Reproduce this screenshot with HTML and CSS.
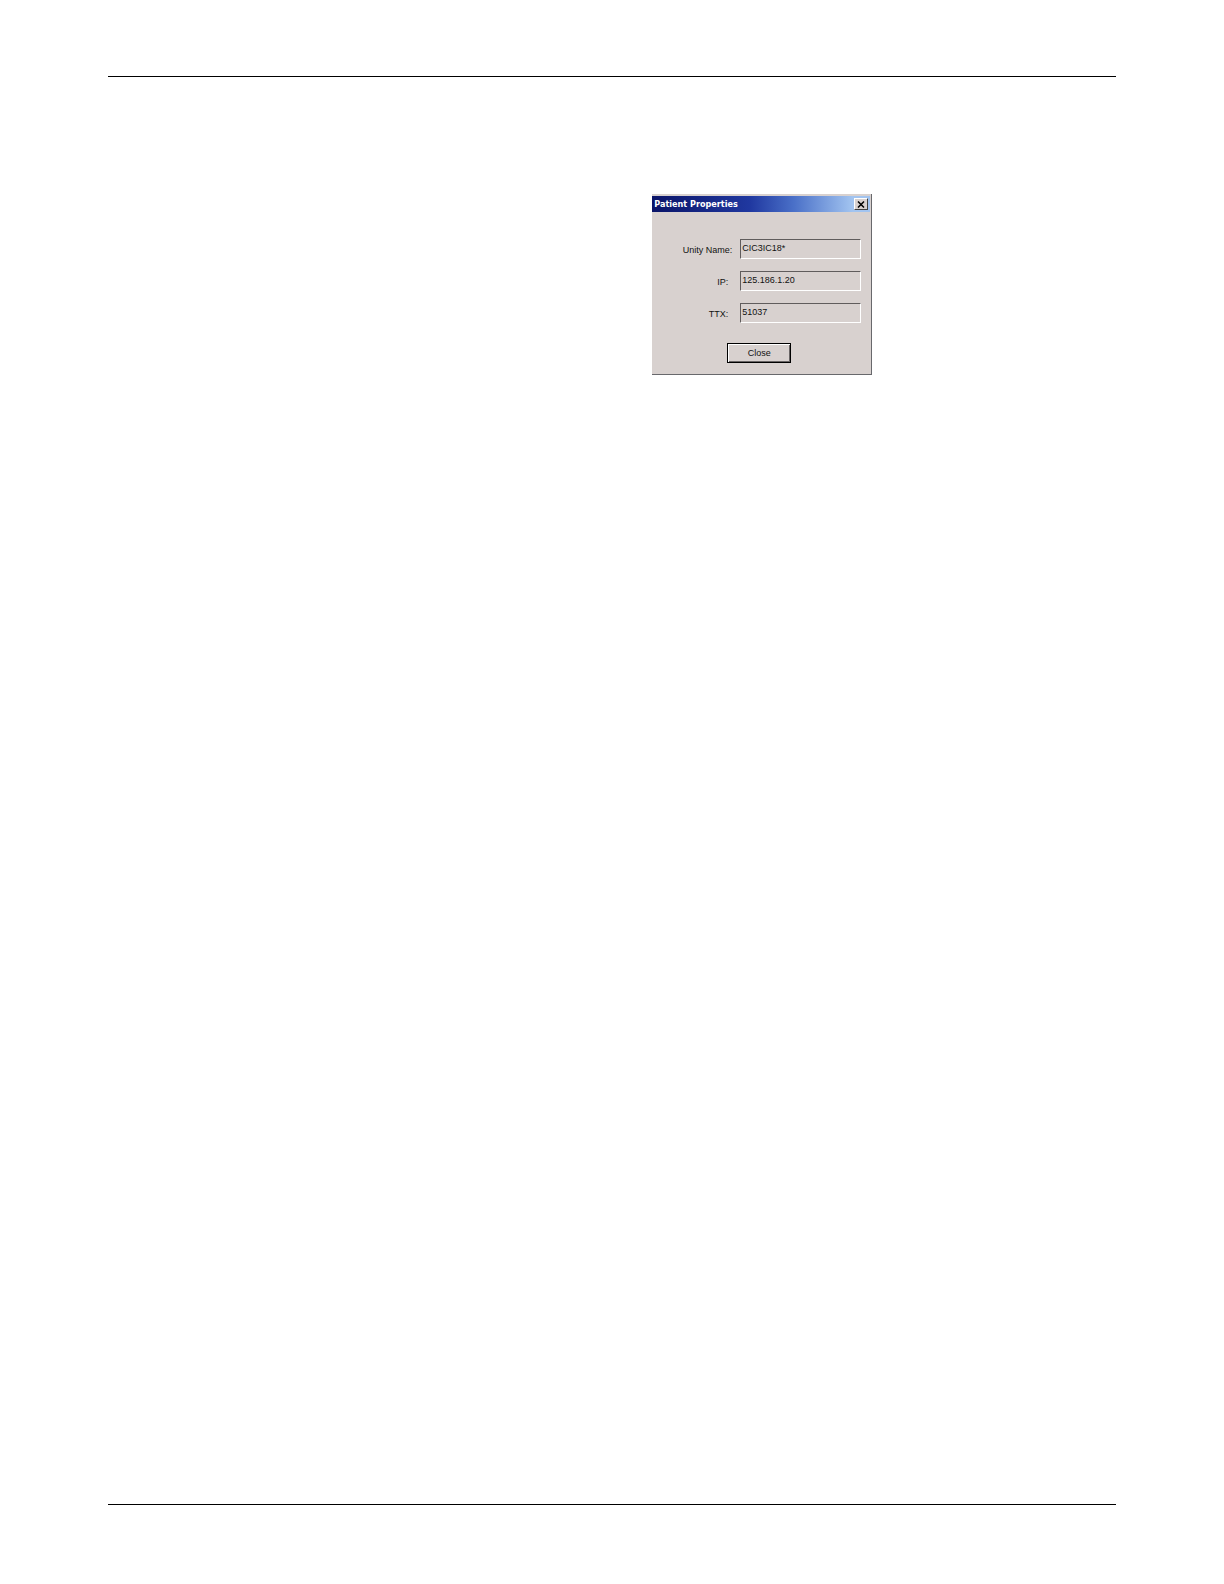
FILE: index.html
```html
<!DOCTYPE html>
<html lang="en">
<head>
<meta charset="utf-8">
<meta name="viewport" content="width=device-width, initial-scale=1">
<title>Patient Properties</title>
<link rel="stylesheet" href="styles.css">
</head>
<body>
<main class="sheet">
  <section class="dialog" role="dialog" aria-labelledby="dialog-title">
    <header class="titlebar">
      <h1 class="title" id="dialog-title">Patient Properties</h1>
      <button class="dismiss" type="button" aria-label="Dismiss">
        <svg class="cross" viewBox="0 0 8 7" aria-hidden="true"><path d="M1 0.5 7 6.5M7 0.5 1 6.5"/></svg>
      </button>
    </header>
    <form class="form">
      <div class="row">
        <label class="label label-long" for="unity">Unity Name:</label>
        <input class="field" id="unity" type="text" value="CIC3IC18*" readonly>
      </div>
      <div class="row">
        <label class="label" for="ip">IP:</label>
        <input class="field" id="ip" type="text" value="125.186.1.20" readonly>
      </div>
      <div class="row">
        <label class="label" for="ttx">TTX:</label>
        <input class="field" id="ttx" type="text" value="51037" readonly>
      </div>
      <button class="close" type="button">Close</button>
    </form>
  </section>
</main>
</body>
</html>
```
FILE: styles.css
```css
* {
  box-sizing: border-box;
}

body {
  margin: 0;
  min-height: 100vh;
  padding: 76px 108px 79px;
  display: flex;
  background: #fff;
  color: #111;
  font: 9px/12px "Liberation Sans", Arial, sans-serif;
}

.sheet {
  flex: 1;
  padding-top: 117px;
  border-top: 1px solid #000;
  border-bottom: 1px solid #000;
}

.dialog {
  width: 220px;
  margin-left: 54%;
  padding-top: 2px;
  background: #d8d1cf;
  border-right: 1px solid #68686c;
  border-bottom: 1px solid #68686c;
}

.titlebar {
  display: flex;
  align-items: center;
  justify-content: space-between;
  height: 16px;
  margin-right: 1px;
  padding: 0 2px;
  background: linear-gradient(to right, #0a1468 0%, #2038a0 45%, #4a70c8 65%, #a2c4f0 92%);
}

.title {
  margin: 0;
  color: #fff;
  font: bold 9px/14px "DejaVu Sans Condensed", "DejaVu Sans", sans-serif;
}

.dismiss {
  display: flex;
  align-items: center;
  justify-content: center;
  width: 14px;
  height: 12px;
  padding: 0;
  background: #d8d1cf;
  border: 1px solid;
  border-color: #fff #404040 #404040 #fff;
}

.cross {
  width: 8px;
  height: 7px;
  fill: none;
  stroke: #000;
  stroke-width: 1.5;
}

.form {
  display: flex;
  flex-direction: column;
  gap: 12px;
  padding: 27px 10px 11px 0;
}

.row {
  display: flex;
  align-items: center;
  justify-content: flex-end;
}

.label {
  padding: 1px 12px 0 0;
}

.label-long {
  padding-right: 8px;
}

.field {
  width: 121px;
  height: 20px;
  padding: 0 1px 3px;
  background: #d8d1cf;
  color: inherit;
  font: inherit;
  border: 1px solid;
  border-color: #605c5c #fff #fff #605c5c;
  border-radius: 0;
  outline: 0;
}

.close {
  width: 64px;
  height: 20px;
  margin: 8px 0 0 75px;
  padding: 0;
  background: #d8d1cf;
  color: inherit;
  font: inherit;
  border: 1px solid #000;
  box-shadow: inset 1px 1px #fff, inset -1px -1px #686464;
}
```
